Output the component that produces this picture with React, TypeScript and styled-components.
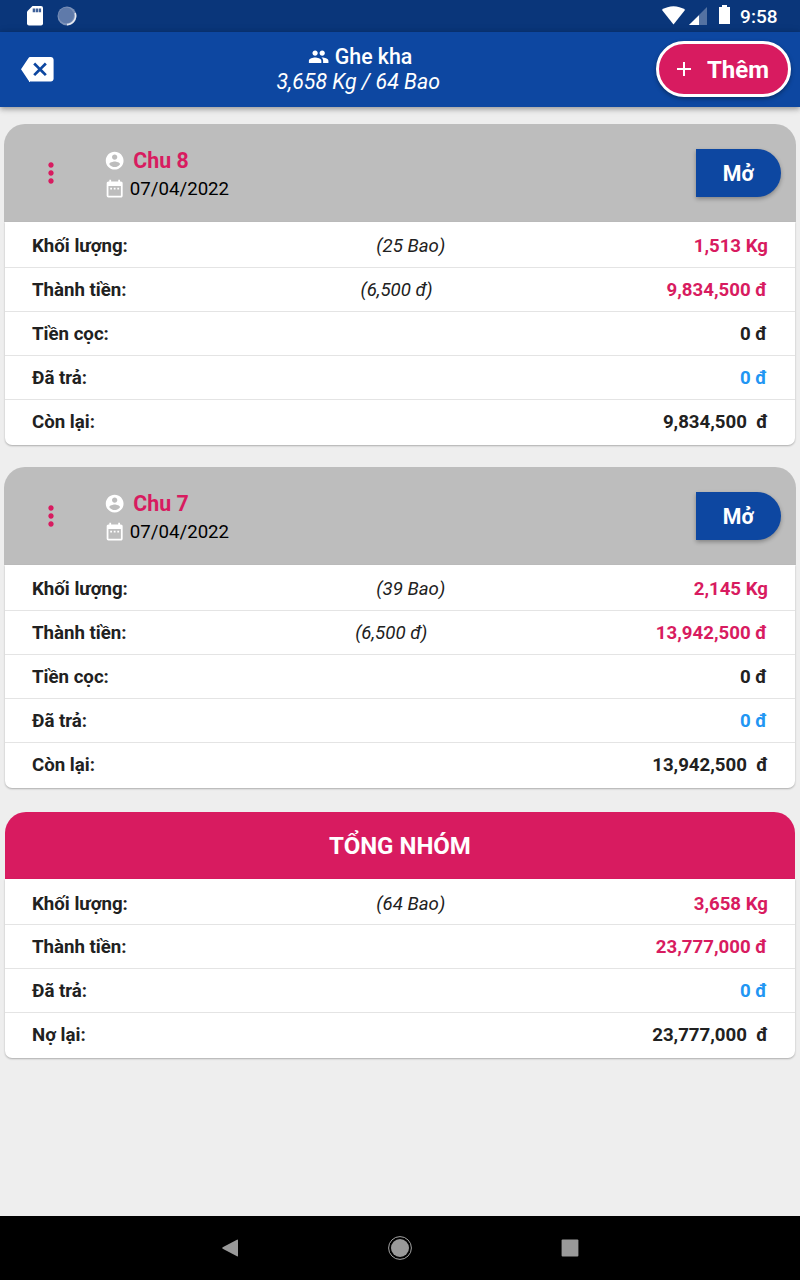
import React from 'react';
import styled, { createGlobalStyle } from 'styled-components';
import { MdBackspace, MdDateRange, MdMoreVert, MdPeople } from 'react-icons/md';

const BLUE = '#0d47a1';
const PINK = '#d81b60';
const INK = '#212121';
const SKY = '#2196f3';

const GlobalStyle = createGlobalStyle`
  * { box-sizing: border-box; }
  body {
    margin: 0;
    background: #eeeeee;
    color: ${INK};
    font-family: Roboto, sans-serif;
  }
`;

const Screen = styled.div`
  display: flex;
  flex-direction: column;
  width: 800px;
  height: 1280px;
  overflow: hidden;
  background: #eeeeee;
`;

const StatusBar = styled.div`
  display: flex;
  flex: none;
  justify-content: space-between;
  height: 32px;
  background: #0a367a;
  svg { display: block; }
`;

const Clock = styled.span`
  color: #fff;
  font-size: 19px;
  font-weight: 500;
  line-height: 33px;
  padding: 0 22.5px 0 8px;
`;

const StatusGroup = styled.div`
  display: flex;
`;

const AppBar = styled.header`
  position: relative;
  display: grid;
  grid-template-columns: 75px 1fr 151px;
  flex: none;
  height: 74.67px;
  background: ${BLUE};
  color: #fff;
  box-shadow: 0 2px 5px rgba(0, 0, 0, 0.3), 0 1px 9px rgba(0, 0, 0, 0.12);
`;

const BackButton = styled.button`
  display: flex;
  align-items: center;
  justify-content: center;
  padding: 0;
  border: 0;
  background: none;
  color: #fff;
`;

const TitleBlock = styled.div`
  display: flex;
  flex-direction: column;
  align-items: center;
  padding: 12px 7.5px 0 0;
  font-size: 21.33px;
  line-height: 25px;
`;

const Title = styled.div`
  display: flex;
  align-items: center;
  gap: 5.3px;
  padding-left: 4px;
  font-weight: 500;
`;

const Subtitle = styled.div`
  font-style: italic;
`;

const AddButton = styled.button`
  display: flex;
  align-items: center;
  justify-self: start;
  width: 135px;
  height: 56px;
  margin: 9.3px 0 0 7px;
  padding: 1px 0 0 16.7px;
  gap: 15.3px;
  border: 3px solid #fff;
  border-radius: 28px;
  background: ${PINK};
  box-shadow: 0 2px 4px rgba(0, 0, 0, 0.35);
  color: #fff;
  font: 700 24px/28px Roboto, sans-serif;
  svg { margin-bottom: 2px; }
`;

const Content = styled.main`
  flex: 1;
  padding: 17.6px 4px 0;
`;

const Card = styled.section<{ $gap?: number }>`
  margin-bottom: ${(p) => p.$gap ?? 0}px;
`;

const CardHeader = styled.div`
  display: flex;
  align-items: center;
  height: 98px;
  padding-right: 15px;
  border-radius: 21px 21px 0 0;
  background: #bdbdbd;
`;

const MenuButton = styled.button`
  display: flex;
  justify-content: center;
  width: 93px;
  padding: 0;
  border: 0;
  background: none;
  color: ${PINK};
`;

const Owner = styled.div`
  flex: 1;
  padding: 2px 0 0 6.7px;
`;

const OwnerLine = styled.div<{ $gap: number }>`
  display: flex;
  align-items: center;
  gap: ${(p) => p.$gap}px;
  height: 28px;
  color: #fff;
`;

const OwnerName = styled.span`
  color: ${PINK};
  font-size: 21.33px;
  font-weight: 700;
`;

const OwnerDate = styled.span`
  padding-top: 1px;
  color: #000;
  font-size: 18.67px;
`;

const OpenButton = styled.button`
  width: 85.3px;
  height: 48px;
  padding: 0;
  border: 0;
  border-radius: 0 24px 24px 0;
  background: ${BLUE};
  box-shadow: 0 2px 4px rgba(0, 0, 0, 0.3);
  color: #fff;
  font: 700 21.33px/25px Roboto, sans-serif;
`;

const TotalHeader = styled.h2`
  display: flex;
  align-items: center;
  justify-content: center;
  height: 67px;
  margin: 0 1.33px;
  padding-top: 1px;
  border-radius: 21px 21px 0 0;
  background: ${PINK};
  color: #fff;
  font-size: 24px;
  font-weight: 700;
`;

const Rows = styled.div<{ $leading: number }>`
  margin: 0 1.33px;
  border-radius: 0 0 7px 7px;
  background: #fff;
  box-shadow: 0 1px 2px rgba(0, 0, 0, 0.28);
  line-height: ${(p) => p.$leading}px;
`;

const Row = styled.div<{ $height: number; $top: number }>`
  display: flex;
  justify-content: space-between;
  height: ${(p) => p.$height}px;
  padding: ${(p) => p.$top}px 26.67px 0;
  font-size: 18.67px;
  &:not(:last-child) { border-bottom: 1.33px solid #e4e4e4; }
`;

const Label = styled.span`
  font-weight: 700;
`;

const Note = styled.span`
  font-style: italic;
`;

const Value = styled.span<{ $color?: string; $inset: boolean }>`
  padding-right: ${(p) => (p.$inset ? 1 : 0)}px;
  color: ${(p) => p.$color ?? INK};
  font-weight: 700;
  white-space: pre;
`;

const NavBar = styled.nav`
  display: grid;
  grid-template-columns: 170px 170px 170px;
  place-content: center;
  place-items: center;
  flex: none;
  height: 64px;
  background: #000;
  svg { display: block; }
`;

type Line = { label: string; note?: string; value: string; color?: string };

const orderLines = (weight: string, bags: string, amount: string): Line[] => [
  { label: 'Khối lượng:', note: `(${bags} Bao)`, value: `${weight} Kg`, color: PINK },
  { label: 'Thành tiền:', note: '(6,500 đ)', value: `${amount} đ`, color: PINK },
  { label: 'Tiền cọc:', value: '0 đ' },
  { label: 'Đã trả:', value: '0 đ', color: SKY },
  { label: 'Còn lại:', value: `${amount}  đ` },
];

const totalLines: Line[] = [
  { label: 'Khối lượng:', note: '(64 Bao)', value: '3,658 Kg', color: PINK },
  { label: 'Thành tiền:', value: '23,777,000 đ', color: PINK },
  { label: 'Đã trả:', value: '0 đ', color: SKY },
  { label: 'Nợ lại:', value: '23,777,000  đ' },
];

function LineList({ lines, first, leading }: { lines: Line[]; first: number; leading: number }) {
  const last = lines.length - 1;
  return (
    <Rows $leading={leading}>
      {lines.map((line, i) => (
        <Row
          key={line.label}
          $height={i === 0 ? first : i === last ? 45.3 : 44}
          $top={i === 0 ? first - leading + 1.3 : 0}
        >
          <Label>{line.label}</Label>
          {line.note && <Note>{line.note}</Note>}
          <Value $color={line.color} $inset={i > 0 && i < last}>{line.value}</Value>
        </Row>
      ))}
    </Rows>
  );
}

function AccountIcon() {
  return (
    <svg width="21.33" height="21.33" viewBox="0 0 24 24" fill="currentColor">
      <path d="M12 2C6.48 2 2 6.48 2 12s4.48 10 10 10 10-4.48 10-10S17.52 2 12 2zm0 3c1.66 0 3 1.34 3 3s-1.34 3-3 3-3-1.34-3-3 1.34-3 3-3zm0 14.2c-2.5 0-4.71-1.28-6-3.22.03-1.99 4-3.08 6-3.08 1.99 0 5.97 1.09 6 3.08-1.29 1.94-3.5 3.22-6 3.22z" />
    </svg>
  );
}

function OrderCard({ name, lines, gap }: { name: string; lines: Line[]; gap: number }) {
  return (
    <Card $gap={gap}>
      <CardHeader>
        <MenuButton aria-label="Menu">
          <MdMoreVert size={32} />
        </MenuButton>
        <Owner>
          <OwnerLine $gap={8.3}>
            <AccountIcon />
            <OwnerName>{name}</OwnerName>
          </OwnerLine>
          <OwnerLine $gap={4.8}>
            <MdDateRange size={21.33} />
            <OwnerDate>07/04/2022</OwnerDate>
          </OwnerLine>
        </Owner>
        <OpenButton>Mở</OpenButton>
      </CardHeader>
      <LineList lines={lines} first={45.3} leading={45} />
    </Card>
  );
}

export default function App() {
  return (
    <>
      <GlobalStyle />
      <Screen>
        <StatusBar>
          <svg width="90" height="32" viewBox="0 0 90 32">
            <path d="M32.5 6H41a2 2 0 0 1 2 2v15.5a2 2 0 0 1-2 2H29a2 2 0 0 1-2-2V11.5z" fill="#fff" />
            <path d="M32.7 8.5h2.4v3.8h-2.4zM35.7 8.5h2.4v3.8h-2.4zM38.7 8.5h2.4v3.8h-2.4z" fill="#3f619a" />
            <circle cx="67" cy="16" r="9.5" fill="#7d92b9" />
            <path d="M75.2 13A9 9 0 0 1 67 24.6" fill="none" stroke="#e6eaf2" strokeWidth="1.6" />
            <circle cx="66.2" cy="15.4" r="7.8" fill="#5f7aaa" />
          </svg>
          <StatusGroup>
            <svg width="71" height="32" viewBox="0 0 71 32">
              <path d="M0.8 9.8C8 5.1 17 5.1 24.2 9.8L12.5 24.5z" fill="#fff" />
              <path d="M46 7v18H28z" fill="#5472a2" />
              <path d="M38 15.2V25h-10z" fill="#fff" />
              <path d="M61 5h5v2h3v17H58V7h3z" fill="#fff" />
            </svg>
            <Clock>9:58</Clock>
          </StatusGroup>
        </StatusBar>
        <AppBar>
          <BackButton aria-label="Back">
            <MdBackspace size={32.6} />
          </BackButton>
          <TitleBlock>
            <Title>
              <MdPeople size={21.33} />
              Ghe kha
            </Title>
            <Subtitle>3,658 Kg / 64 Bao</Subtitle>
          </TitleBlock>
          <AddButton>
            <svg width="16" height="16" viewBox="0 0 16 16">
              <path d="M8 1v14M1 8h14" stroke="#fff" strokeWidth="2" />
            </svg>
            Thêm
          </AddButton>
        </AppBar>
        <Content>
          <OrderCard name="Chu 8" lines={orderLines('1,513', '25', '9,834,500')} gap={22.45} />
          <OrderCard name="Chu 7" lines={orderLines('2,145', '39', '13,942,500')} gap={24.15} />
          <Card>
            <TotalHeader>TỔNG NHÓM</TotalHeader>
            <LineList lines={totalLines} first={45.6} leading={44} />
          </Card>
        </Content>
        <NavBar>
          <svg width="24" height="24" viewBox="0 0 24 24">
            <path d="M20 4.2v15.6q0 1-1 .5L4.7 12.8q-1-.8 0-1.6L19 3.7q1-.4 1 .5z" fill="#999" />
          </svg>
          <svg width="26" height="26" viewBox="0 0 26 26">
            <circle cx="13" cy="13" r="11.4" fill="none" stroke="#b5b5b5" strokeWidth="0.9" />
            <circle cx="13" cy="13" r="9" fill="#999" />
          </svg>
          <svg width="18" height="18" viewBox="0 0 18 18">
            <rect x="0.6" y="0.6" width="16.8" height="16.8" rx="1" fill="#999" />
          </svg>
        </NavBar>
      </Screen>
    </>
  );
}
